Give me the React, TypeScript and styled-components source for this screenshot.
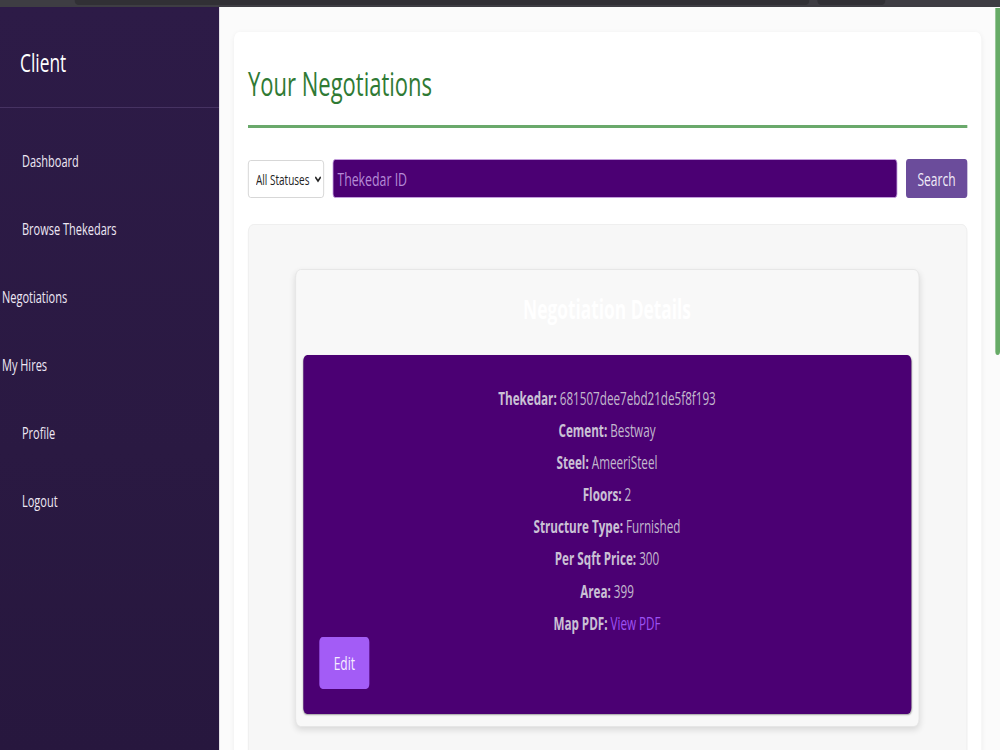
import React from "react";
import styled, { createGlobalStyle } from "styled-components";

const GlobalStyle = createGlobalStyle`
  html, body { margin: 0; padding: 0; overflow: hidden; background: #fbfbfb; }
  body { font-family: "Open Sans", "Noto Sans", "Liberation Sans", sans-serif; }
  * { box-sizing: border-box; }
`;

/* The reference is a horizontally squeezed capture (2/3 width), so the page is
   laid out at its natural 1500px width and squeezed the same way. */
const Stage = styled.div`
  width: 1500px;
  height: 750px;
  transform: scaleX(0.666667);
  transform-origin: 0 0;
  display: flex;
  flex-direction: column;
  overflow: hidden;
`;

const Chrome = styled.div`
  flex: none;
  height: 7px;
  background: #3e3d43;
  display: flex;
  gap: 12px;
  padding-left: 112px;
`;

const ChromeShape = styled.div<{ $w: number }>`
  width: ${(p) => p.$w}px;
  height: 5px;
  background: #313035;
  border-radius: 0 0 6px 6px;
`;

const Body = styled.div`
  flex: 1;
  min-height: 0;
  display: flex;
`;

const Sidebar = styled.aside`
  flex: none;
  width: 328.5px;
  background: linear-gradient(180deg, #2d1b47 0%, #2a1942 60%, #27173e 100%);
  display: flex;
  flex-direction: column;
`;

const SideHeader = styled.div`
  padding: 39px 30px 29px;
  border-bottom: 1px solid rgba(190, 160, 230, 0.18);
  color: #ffffff;
  font-size: 26px;
  line-height: 32px;
`;

const Nav = styled.nav`
  padding-top: 18px;
  display: flex;
  flex-direction: column;
`;

const NavItem = styled.a<{ $flush?: boolean }>`
  height: 68px;
  display: flex;
  align-items: center;
  padding-left: ${(p) => (p.$flush ? 3 : 33)}px;
  color: #eee8f4;
  font-size: 16.5px;
  text-decoration: none;
`;

const Main = styled.main`
  flex: 1;
  min-width: 0;
  background: #fbfbfb;
  padding: 25px 21px 0 22.5px;
  overflow: hidden;
`;

const Card = styled.section`
  background: #ffffff;
  border-radius: 8px;
  box-shadow: 0 1px 6px rgba(0, 0, 0, 0.06);
  padding: 32px 21px 40px;
`;

const Title = styled.h1`
  margin: 0;
  font-size: 33px;
  line-height: 40px;
  font-weight: 400;
  color: #2f7a34;
  padding-bottom: 21px;
  border-bottom: 3px solid #6aa96b;
`;

const FilterRow = styled.div`
  margin-top: 31px;
  height: 39px;
  display: flex;
  align-items: center;
  gap: 13px;
`;

const StatusSelect = styled.select`
  flex: none;
  width: 114px;
  height: 38px;
  background: #ffffff;
  border: 1px solid #cfcfcf;
  border-radius: 4px;
  padding: 0 4px 0 7px;
  font-family: inherit;
  font-size: 15px;
  color: #222;
`;

const SearchInput = styled.input`
  flex: 1;
  height: 39px;
  background: #4b0073;
  border: 1px solid #c9a3e3;
  border-radius: 4px;
  padding: 0 6px;
  font-family: inherit;
  font-size: 18.5px;
  color: #e8d8f5;
  &::placeholder { color: #b58bd6; }
`;

const SearchButton = styled.button`
  flex: none;
  width: 91.5px;
  height: 39px;
  background: #6b4c9b;
  color: #f1ebf8;
  border: none;
  border-radius: 4px;
  font-family: inherit;
  font-size: 18px;
`;

const Panel = styled.div`
  margin-top: 26px;
  background: #f7f7f7;
  border: 1px solid #ececec;
  border-radius: 8px;
  padding: 44px 71px 44px 69.5px;
`;

const DetailCard = styled.article`
  background: #f8f8f8;
  border: 1px solid #e4e4e4;
  border-radius: 8px;
  box-shadow: 0 3px 8px rgba(0, 0, 0, 0.12);
  padding: 23px 11px 12px;
`;

const DetailTitle = styled.h3`
  margin: 0 0 30px;
  text-align: center;
  color: #ffffff;
  font-size: 26px;
  line-height: 32px;
  font-weight: 700;
`;

const InfoBox = styled.div`
  background: #4b0073;
  border-radius: 6px;
  box-shadow: 0 1px 2px rgba(0, 0, 0, 0.35);
  padding: 31px 24px 25px;
  display: flex;
  flex-direction: column;
`;

const InfoList = styled.div`
  display: flex;
  flex-direction: column;
  align-items: center;
  gap: 8.1px;
`;

const InfoLine = styled.p`
  margin: 0;
  font-size: 17.5px;
  line-height: 24px;
  color: #c2b8cd;
`;

const Label = styled.strong`
  font-weight: 700;
  color: #cac1d5;
`;

const PdfLink = styled.a`
  color: #9d52f4;
  text-decoration: none;
`;

const EditButton = styled.button`
  align-self: flex-start;
  margin-top: 2px;
  height: 52px;
  padding: 0 22px;
  background: #a35cf6;
  color: #f6eeff;
  border: none;
  border-radius: 5px;
  font-family: inherit;
  font-size: 18px;
`;

const Rail = styled.div`
  flex: none;
  width: 7.5px;
  background: #fbfbfb;
`;

const Thumb = styled.div`
  margin-top: 1px;
  height: 347px;
  background: #67ab67;
  border-radius: 0 0 4px 4px;
`;

const navItems: { label: string; flush?: boolean }[] = [
  { label: "Dashboard" },
  { label: "Browse Thekedars" },
  { label: "Negotiations", flush: true },
  { label: "My Hires", flush: true },
  { label: "Profile" },
  { label: "Logout" },
];

const details: [string, string][] = [
  ["Thekedar", "681507dee7ebd21de5f8f193"],
  ["Cement", "Bestway"],
  ["Steel", "AmeeriSteel"],
  ["Floors", "2"],
  ["Structure Type", "Furnished"],
  ["Per Sqft Price", "300"],
  ["Area", "399"],
];

export default function App() {
  return (
    <>
      <GlobalStyle />
      <Stage>
        <Chrome>
          <ChromeShape $w={1102} />
          <ChromeShape $w={102} />
        </Chrome>
        <Body>
          <Sidebar>
            <SideHeader>Client</SideHeader>
            <Nav>
              {navItems.map((n) => (
                <NavItem key={n.label} $flush={n.flush}>
                  {n.label}
                </NavItem>
              ))}
            </Nav>
          </Sidebar>
          <Main>
            <Card>
              <Title>Your Negotiations</Title>
              <FilterRow>
                <StatusSelect defaultValue="all">
                  <option value="all">All Statuses</option>
                  <option value="pending">Pending</option>
                  <option value="accepted">Accepted</option>
                  <option value="rejected">Rejected</option>
                </StatusSelect>
                <SearchInput placeholder="Thekedar ID" />
                <SearchButton>Search</SearchButton>
              </FilterRow>
              <Panel>
                <DetailCard>
                  <DetailTitle>Negotiation Details</DetailTitle>
                  <InfoBox>
                    <InfoList>
                      {details.map(([k, v]) => (
                        <InfoLine key={k}>
                          <Label>{k}:</Label> {v}
                        </InfoLine>
                      ))}
                      <InfoLine>
                        <Label>Map PDF:</Label> <PdfLink href="#">View PDF</PdfLink>
                      </InfoLine>
                    </InfoList>
                    <EditButton>Edit</EditButton>
                  </InfoBox>
                </DetailCard>
              </Panel>
            </Card>
          </Main>
          <Rail>
            <Thumb />
          </Rail>
        </Body>
      </Stage>
    </>
  );
}
